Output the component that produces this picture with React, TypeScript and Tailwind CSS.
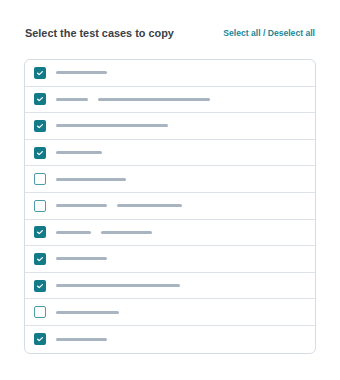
import React from "react";

type Row = { checked: boolean; bars: number[][] };

// bars: [start offset from text column, width]
const rows: Row[] = [
  { checked: true, bars: [[0, 51]] },
  { checked: true, bars: [[0, 32], [42, 112]] },
  { checked: true, bars: [[0, 112]] },
  { checked: true, bars: [[0, 46]] },
  { checked: false, bars: [[0, 70]] },
  { checked: false, bars: [[0, 51], [61, 65]] },
  { checked: true, bars: [[0, 35], [45, 51]] },
  { checked: true, bars: [[0, 51]] },
  { checked: true, bars: [[0, 124]] },
  { checked: false, bars: [[0, 63]] },
  { checked: true, bars: [[0, 51]] },
];

function Checkbox({ checked }: { checked: boolean }) {
  if (!checked) {
    return <span className="block h-[12px] w-[12px] rounded-[2px] border border-[#4f9ca8] bg-white" />;
  }
  return (
    <span className="flex h-[12px] w-[12px] items-center justify-center rounded-[2px] bg-[#137a88]">
      <svg width="8" height="8" viewBox="0 0 8 8" fill="none">
        <path d="M1.6 4.2 L3.2 5.6 L6.4 2.6" stroke="white" strokeWidth="1.3" strokeLinecap="round" strokeLinejoin="round" />
      </svg>
    </span>
  );
}

export default function App() {
  return (
    <div className="h-[380px] w-[340px] bg-white font-['Liberation_Sans',Arial,sans-serif]">
      <div className="flex items-center justify-between pl-[25px] pr-[25px] pt-[26px]">
        <h1 className="text-[10.9px] font-bold leading-[14px] text-[#3b4045]">Select the test cases to copy</h1>
        <button className="text-[8.6px] font-bold leading-[14px] text-[#1a8797]">Select all / Deselect all</button>
      </div>
      <div className="mx-[24px] mt-[19px] overflow-hidden rounded-[6px] border border-[#d6dce3]">
        {rows.map((row, i) => (
          <div
            key={i}
            className={`flex h-[26.6px] items-center pl-[9px] ${i < rows.length - 1 ? "border-b border-[#dde2e8]" : ""}`}
          >
            <Checkbox checked={row.checked} />
            <div className="relative ml-[10px] h-[3px] flex-1">
              {row.bars.map(([left, width], j) => (
                <span
                  key={j}
                  className="absolute top-0 h-[3px] rounded-full bg-[#a9b4c1]"
                  style={{ left, width }}
                />
              ))}
            </div>
          </div>
        ))}
      </div>
    </div>
  );
}
